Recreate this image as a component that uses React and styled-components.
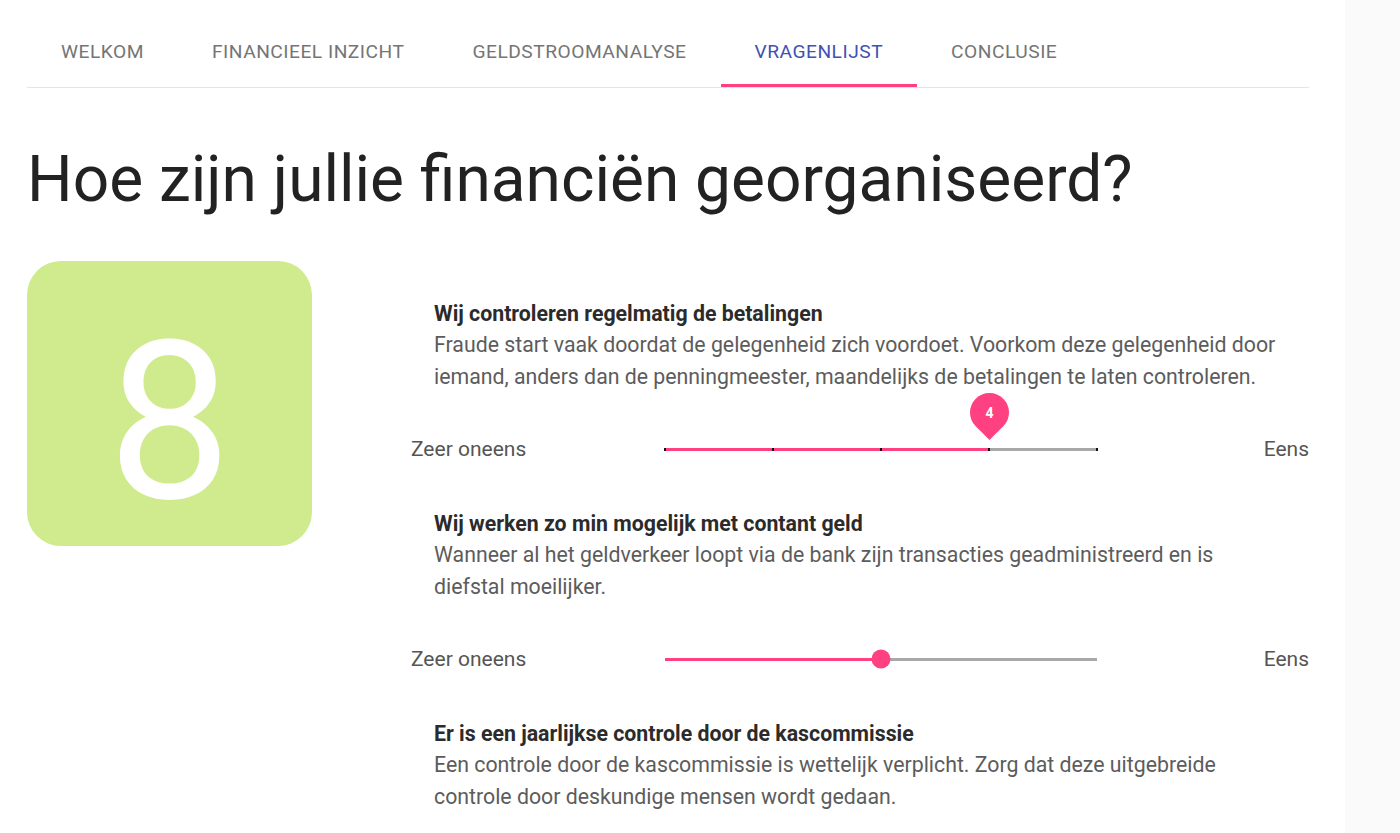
import styled, { createGlobalStyle } from "styled-components";

const GlobalStyle = createGlobalStyle`
  body {
    margin: 0;
    background: #fafafa;
    font-family: Roboto, "Liberation Sans", sans-serif;
  }
`;

const Page = styled.div`
  width: 1345px;
  min-height: 100vh;
  box-sizing: border-box;
  padding: 15px 36px 0 27px;
  background: #fff;
`;

const TabBar = styled.nav`
  display: flex;
  height: 72px;
  border-bottom: 1px solid #e4e4e4;
`;

const Tab = styled.div`
  position: relative;
  display: flex;
  align-items: center;
  padding: 0 34px;
  font-size: 19.2px;
  font-weight: 400;
  letter-spacing: 0.5px;
  text-transform: uppercase;
  color: ${(p) => (p.$active ? "#3f51b5" : "#757575")};
  cursor: pointer;

  &::after {
    content: "";
    position: absolute;
    left: 0;
    right: 0;
    bottom: 0;
    height: 3px;
    background: ${(p) => (p.$active ? "#ff4081" : "transparent")};
  }
`;

const Title = styled.h1`
  margin: 55px 0 44px;
  font-size: 64px;
  font-weight: 400;
  line-height: 74px;
  color: #222;
`;

const Body = styled.div`
  display: grid;
  grid-template-columns: 384px 1fr;
`;

const ScoreBox = styled.div`
  width: 285px;
  height: 285px;
  box-sizing: border-box;
  padding-top: 38px;
  border-radius: 34px;
  background: #cfeb8e;
  display: flex;
  align-items: center;
  justify-content: center;
  color: #fff;
  font-size: 220px;
  line-height: 1;
`;

const Questions = styled.div`
  padding-top: 37px;
`;

const Question = styled.section`
  margin-bottom: 35px;
`;

const QTitle = styled.h3`
  margin: 0;
  padding-left: 23px;
  font-size: 21.3px;
  font-weight: 700;
  line-height: 31px;
  color: #2b2b2b;
`;

const QText = styled.p`
  margin: 0;
  padding-left: 23px;
  max-width: 852px;
  font-size: 21.3px;
  line-height: 31.5px;
  color: #5c5c5c;
`;

const SliderRow = styled.div`
  display: grid;
  grid-template-columns: 254px 432px 1fr;
  align-items: center;
  height: 48px;
  margin-top: 33px;
`;

const EndLabel = styled.span`
  font-size: 21px;
  color: #555;
  text-align: ${(p) => (p.$right ? "right" : "left")};
`;

const Track = styled.div`
  position: relative;
  height: 3px;
  background: #a8a8a8;
`;

const Fill = styled.div`
  position: absolute;
  left: 0;
  top: 0;
  bottom: 0;
  width: ${(p) => p.$pct}%;
  background: #ff4081;
`;

const Tick = styled.span`
  position: absolute;
  top: 0;
  left: ${(p) => p.$pct}%;
  width: 2px;
  height: 3px;
  margin-left: -1px;
  background: #111;
`;

const Thumb = styled.span`
  position: absolute;
  top: 50%;
  left: ${(p) => p.$pct}%;
  width: 19px;
  height: 19px;
  border-radius: 50%;
  background: #ff4081;
  transform: translate(-50%, -50%);
`;

const Bubble = styled.span`
  position: absolute;
  left: calc(${(p) => p.$pct}% - 19.5px);
  top: calc(50% - 56px);
  width: 39px;
  height: 39px;
  border-radius: 50% 50% 50% 0;
  background: #ff4081;
  transform: rotate(-45deg);
  display: flex;
  align-items: center;
  justify-content: center;
`;

const BubbleText = styled.span`
  transform: rotate(45deg);
  color: #fff;
  font-size: 14px;
  font-weight: 700;
`;

const tabs = ["Welkom", "Financieel inzicht", "Geldstroomanalyse", "Vragenlijst", "Conclusie"];

const questions = [
  {
    title: "Wij controleren regelmatig de betalingen",
    text: "Fraude start vaak doordat de gelegenheid zich voordoet. Voorkom deze gelegenheid door iemand, anders dan de penningmeester, maandelijks de betalingen te laten controleren.",
    value: 4,
    focused: true,
  },
  {
    title: "Wij werken zo min mogelijk met contant geld",
    text: "Wanneer al het geldverkeer loopt via de bank zijn transacties geadministreerd en is diefstal moeilijker.",
    value: 3,
  },
  {
    title: "Er is een jaarlijkse controle door de kascommissie",
    text: "Een controle door de kascommissie is wettelijk verplicht. Zorg dat deze uitgebreide controle door deskundige mensen wordt gedaan.",
    value: 3,
    noSlider: true,
  },
];

const Slider = ({ value, focused }) => {
  const pct = ((value - 1) / 4) * 100;
  return (
    <SliderRow>
      <EndLabel>Zeer oneens</EndLabel>
      <Track>
        <Fill $pct={pct} />
        {focused && [0, 25, 50, 75, 100].map((t) => <Tick key={t} $pct={t} />)}
        {focused ? (
          <Bubble $pct={pct}>
            <BubbleText>{value}</BubbleText>
          </Bubble>
        ) : (
          <Thumb $pct={pct} />
        )}
      </Track>
      <EndLabel $right>Eens</EndLabel>
    </SliderRow>
  );
};

export default function App() {
  return (
    <Page>
      <GlobalStyle />
      <TabBar>
        {tabs.map((t) => (
          <Tab key={t} $active={t === "Vragenlijst"}>
            {t}
          </Tab>
        ))}
      </TabBar>
      <Title>Hoe zijn jullie financiën georganiseerd?</Title>
      <Body>
        <div>
          <ScoreBox>8</ScoreBox>
        </div>
        <Questions>
          {questions.map((q) => (
            <Question key={q.title}>
              <QTitle>{q.title}</QTitle>
              <QText>{q.text}</QText>
              {!q.noSlider && <Slider value={q.value} focused={q.focused} />}
            </Question>
          ))}
        </Questions>
      </Body>
    </Page>
  );
}
